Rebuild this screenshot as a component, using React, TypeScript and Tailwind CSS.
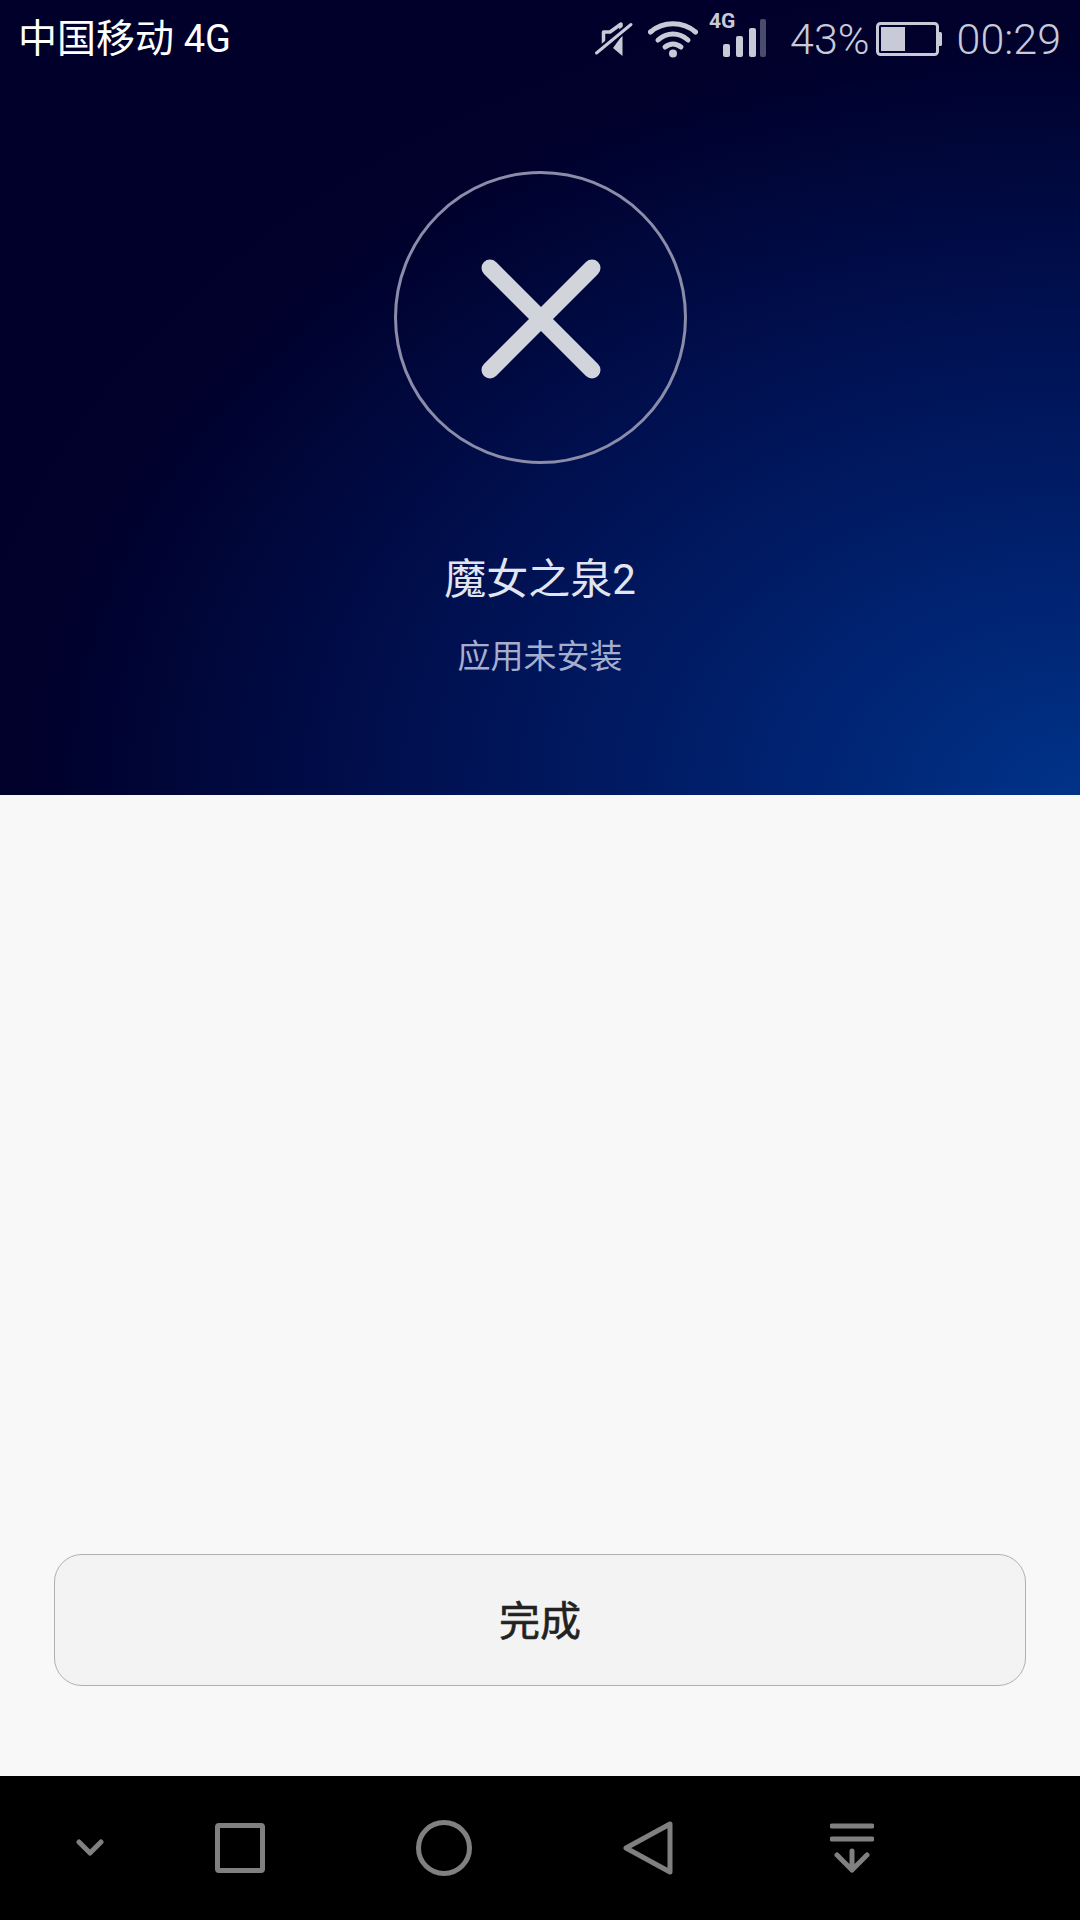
const CJK = "font-['Roboto','Noto_Sans_CJK_SC',sans-serif]";

function MuteIcon() {
  return (
    <svg width="40" height="40" viewBox="0 0 40 40" fill="none" aria-hidden>
      <path d="M27 15V5L16 13H9.500V28" stroke="#c8cad8" strokeWidth="3.500" strokeLinejoin="round" />
      <path d="M28.500 16V37L19 29z" fill="#c8cad8" />
      <path d="M2 34L37 5.500" stroke="#00012c" strokeWidth="7" />
      <path d="M2.500 34L37 5.500" stroke="#c8cad8" strokeWidth="3" strokeLinecap="round" />
    </svg>
  );
}

function WifiIcon() {
  return (
    <svg width="50" height="38" viewBox="0 0 50 38" fill="none" aria-hidden>
      <path d="M2.500 12C15 1 35 1 47.500 12" stroke="#c8cad8" strokeWidth="5" strokeLinecap="round" />
      <path d="M10 20C19 12 31 12 40 20" stroke="#c8cad8" strokeWidth="5" strokeLinecap="round" />
      <path d="M17 27c5-4 11-4 16 0" stroke="#c8cad8" strokeWidth="5" strokeLinecap="round" />
      <circle cx="25" cy="33.500" r="4" fill="#c8cad8" />
    </svg>
  );
}

function SignalIcon() {
  return (
    <div className="relative h-[56px] w-[58px]">
      <span className="absolute left-0 top-[-1px] font-['Roboto',sans-serif] text-[21px] font-bold leading-[22px] text-[#c8cad8]">
        4G
      </span>
      <svg className="absolute left-[14px] top-[8px]" width="44" height="38" viewBox="0 0 44 38" aria-hidden>
        <rect x="0" y="25" width="7" height="13" rx="2" fill="#c8cad8" />
        <rect x="13" y="17" width="7" height="21" rx="2" fill="#c8cad8" />
        <rect x="26" y="9" width="7" height="29" rx="2" fill="#c8cad8" />
        <rect x="37" y="0" width="6" height="38" rx="2" fill="#4a4c6e" />
      </svg>
    </div>
  );
}

function BatteryIcon() {
  return (
    <svg width="66" height="34" viewBox="0 0 66 34" fill="none" aria-hidden>
      <rect x="1.500" y="1.500" width="60" height="31" rx="3" stroke="#c8cad8" strokeWidth="3" />
      <rect x="5" y="5" width="24" height="24" fill="#c8cad8" />
      <rect x="62" y="10" width="4" height="14" rx="1.500" fill="#c8cad8" />
    </svg>
  );
}

function StatusBar() {
  return (
    <div className={`flex h-[78px] items-center justify-between pl-[18px] pr-[19px] ${CJK}`}>
      <span className="text-[39px] leading-none text-white">
        中国移动 <span className="text-[38px]">4G</span>
      </span>
      <div className="flex items-center text-[#c8cad8]">
        <MuteIcon />
        <div className="ml-[14px]">
          <WifiIcon />
        </div>
        <div className="ml-[11px]">
          <SignalIcon />
        </div>
        <span className="ml-[23px] text-[43px] font-light leading-none">43%</span>
        <div className="ml-[6px]">
          <BatteryIcon />
        </div>
        <span className="ml-[15px] text-[43px] font-light leading-none">00:29</span>
      </div>
    </div>
  );
}

function FailedBadge() {
  return (
    <div className="flex h-[293px] w-[293px] items-center justify-center rounded-full border-[3px] border-[#8a8ca8]">
      <svg width="122" height="122" viewBox="0 0 122 122" fill="none" aria-hidden>
        <path d="M11 11l102 102M113 11L11 113" stroke="#d2d4dc" strokeWidth="17" strokeLinecap="round" />
      </svg>
    </div>
  );
}

function NavBar() {
  return (
    <div className="flex h-[144px] items-center bg-black">
      <div className="flex w-[138px] justify-center pl-[42px]">
        <svg width="28" height="18" viewBox="0 0 28 18" fill="none" aria-hidden>
          <path d="M3 3l11 11L25 3" stroke="#808080" strokeWidth="5" strokeLinecap="round" strokeLinejoin="round" />
        </svg>
      </div>
      <div className="flex w-[204px] justify-center">
        <div className="h-[50px] w-[50px] rounded-[4px] border-[5px] border-[#808080]" />
      </div>
      <div className="flex w-[204px] justify-center">
        <div className="h-[56px] w-[56px] rounded-full border-[5px] border-[#808080]" />
      </div>
      <div className="flex w-[204px] justify-center">
        <svg width="50" height="56" viewBox="0 0 50 56" fill="none" aria-hidden>
          <path d="M47 4v48L3 28z" stroke="#808080" strokeWidth="5" strokeLinejoin="round" />
        </svg>
      </div>
      <div className="flex w-[204px] justify-center">
        <svg width="44" height="50" viewBox="0 0 44 50" fill="none" aria-hidden>
          <path d="M2 3h40M2 16h40" stroke="#808080" strokeWidth="5" strokeLinecap="round" />
          <path d="M22 28v19M7 32l15 15 15-15" stroke="#808080" strokeWidth="5" strokeLinecap="round" strokeLinejoin="round" />
        </svg>
      </div>
    </div>
  );
}

export default function App() {
  return (
    <div className={`flex h-[1920px] w-[1080px] flex-col bg-[#f8f8f8] ${CJK}`}>
      <div className="h-[795px] bg-[radial-gradient(ellipse_1220px_880px_at_100%_100%,#003389_0%,#002270_25%,#001050_55%,#00012c_85%,#00002a_100%)]">
        <StatusBar />
        <div className="flex flex-col items-center pt-[93px]">
          <FailedBadge />
          <span className="mt-[91px] text-[42px] leading-[50px] text-[#e2e5f0]">魔女之泉2</span>
          <span className="mt-[30px] text-[33px] leading-[44px] text-[#a6aed0]">应用未安装</span>
        </div>
      </div>
      <div className="flex flex-1 flex-col justify-end px-[54px] pb-[90px]">
        <button className="h-[132px] rounded-[28px] border border-[#b0b0b0] bg-[#f3f3f3] pt-[6px] text-[41px] text-[#222222] [-webkit-text-stroke:0.6px_#222222]">
          完成
        </button>
      </div>
      <NavBar />
    </div>
  );
}
